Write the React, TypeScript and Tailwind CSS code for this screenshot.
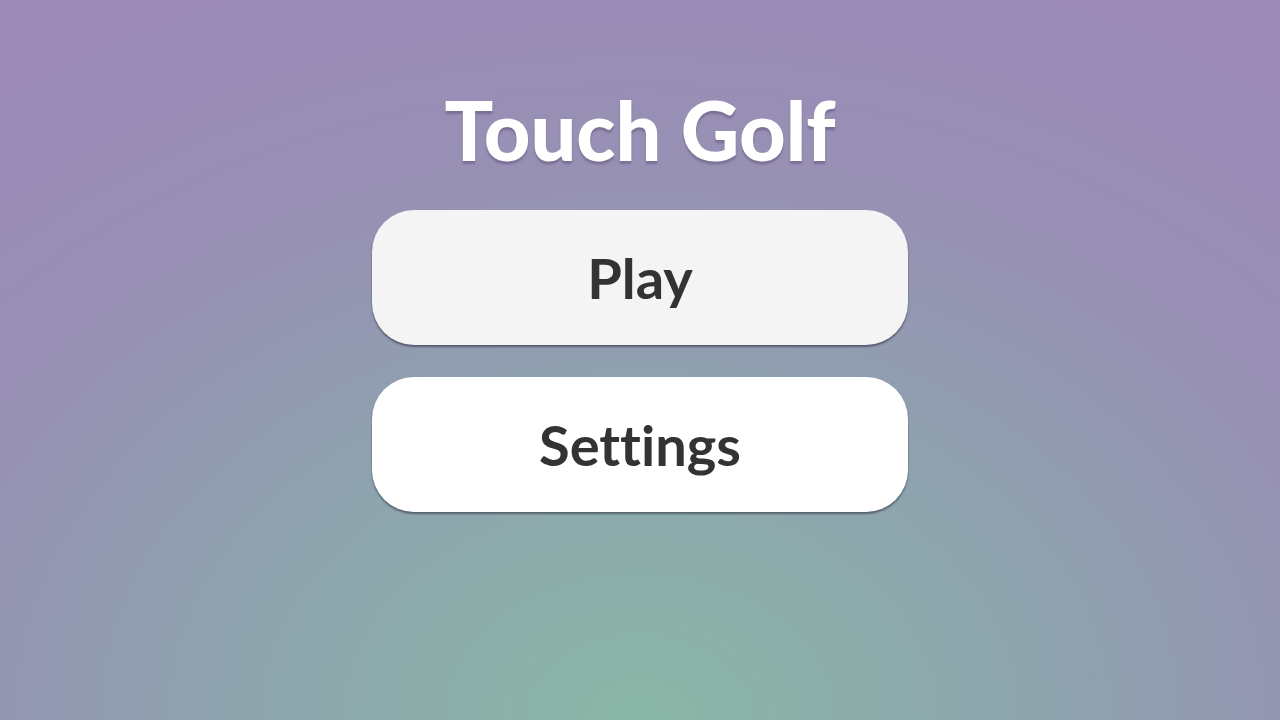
export default function App() {
  return (
    <div
      className="flex h-[720px] w-[1280px] flex-col items-center overflow-hidden bg-[radial-gradient(ellipse_1050px_780px_at_50%_100%,#89b7a6_0%,#8ea3ae_40%,#9791b4_70%,#9b8ab8_100%)]"
      style={{ fontFamily: "Lato, 'Noto Sans', sans-serif" }}
    >
      <h1 className="mt-[80px] text-[81px] leading-[100px] font-black text-white [text-shadow:0_3px_2px_rgba(60,40,80,0.3)]">
        Touch Golf
      </h1>
      <div className="mt-[30px] flex flex-col gap-[32px]">
        <button className="flex h-[135px] w-[536px] items-center justify-center rounded-[42px] bg-[#f4f4f4] text-[56px] font-bold text-[#333333] [font-variant-ligatures:none] shadow-[0_2px_2px_rgba(40,40,60,0.55)]">
          Play
        </button>
        <button className="flex h-[135px] w-[536px] items-center justify-center rounded-[42px] bg-white text-[56px] font-bold text-[#333333] [font-variant-ligatures:none] shadow-[0_2px_2px_rgba(40,40,60,0.55)]">
          Settings
        </button>
      </div>
    </div>
  );
}
